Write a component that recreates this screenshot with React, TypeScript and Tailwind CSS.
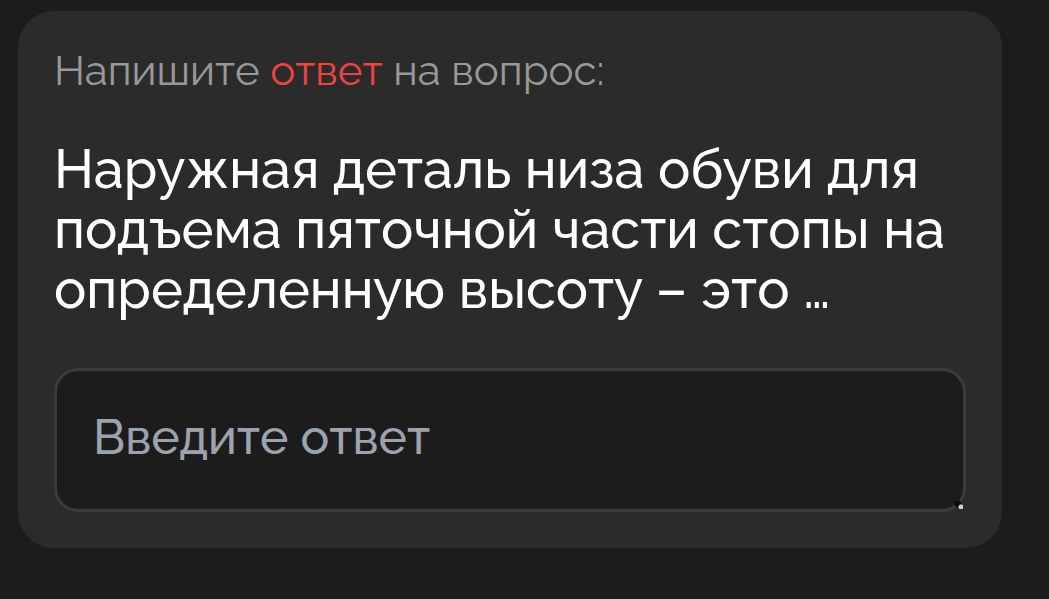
import React, { useState } from 'react';

const resizerClasses =
  '[&::-webkit-resizer]:bg-[radial-gradient(circle_at_calc(100%-2px)_calc(100%-2px),#d0d0d0_2px,transparent_3px),radial-gradient(circle_at_calc(100%-5px)_calc(100%-5px),#0c0c0c_3px,transparent_4px)]';

const App: React.FC = () => {
  const [answer, setAnswer] = useState('');

  return (
    <main className="min-h-screen bg-[#1c1c1c] pt-[11px] pr-[47px] pb-12 pl-[18px] font-['Raleway','Lato',sans-serif]">
      <section className="rounded-[36px] bg-[#2b2b2b] p-9">
        <p className="text-[42px] leading-[48px] font-normal text-[#999999]">
          Напишите <span className="text-[#ef4444]">ответ</span> на вопрос:
        </p>
        <h1 className="mt-11 text-[54px] leading-[60px] font-medium text-white">
          Наружная деталь низа обуви для подъема пяточной части стопы на определенную высоту – это …
        </h1>
        <textarea
          aria-label="Введите ответ"
          placeholder="Введите ответ"
          value={answer}
          onChange={(e) => setAnswer(e.target.value)}
          className={`mt-[49px] block h-36 w-full resize rounded-3xl border-3 border-[#3b3b3b] bg-[#1c1c1c] p-9 text-5xl leading-[60px] font-medium text-white placeholder:text-[#9ca3af] ${resizerClasses}`}
        />
      </section>
    </main>
  );
};

export default App;
